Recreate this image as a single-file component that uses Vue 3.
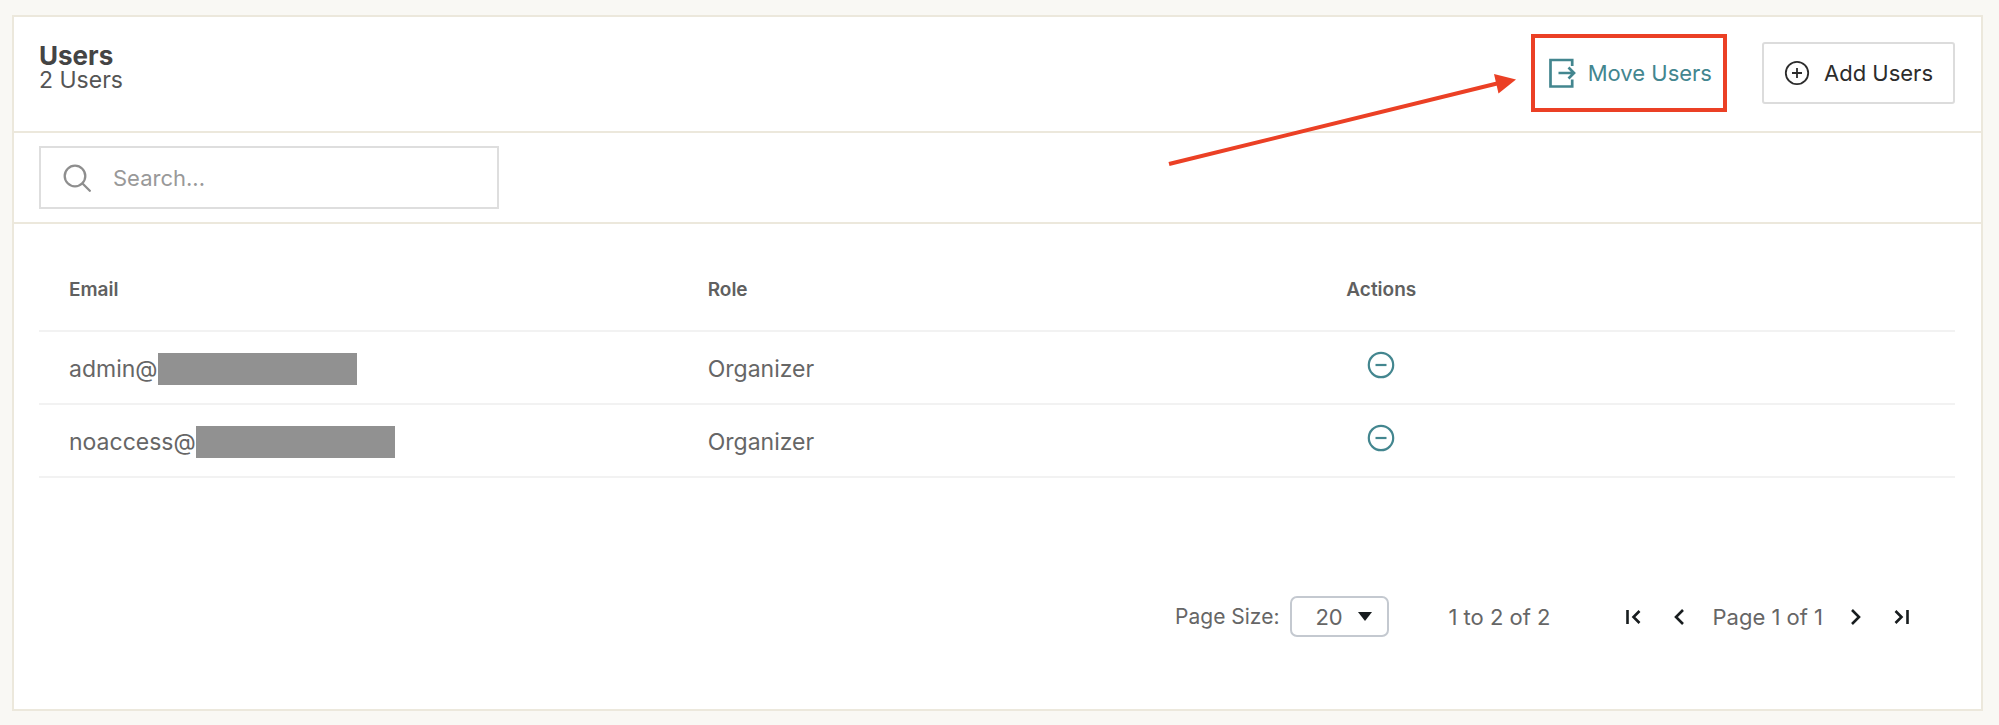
<script setup>
import { ref } from 'vue'

const search = ref('')
const pageSize = ref('20')
const users = [
  { name: 'admin@', role: 'Organizer' },
  { name: 'noaccess@', role: 'Organizer' }
]
</script>

<template>
  <main class="page">
    <section class="card">
      <header class="head">
        <div>
          <h1 class="title">Users</h1>
          <p class="count">2 Users</p>
        </div>
        <div class="head-actions">
          <div class="highlight">
            <svg class="arrow" width="357" height="100" viewBox="0 0 357 100" aria-hidden="true">
              <path d="M9 93 L337 12.500" stroke="#eb4025" stroke-width="4" />
              <path d="M334 3 L356 8.500 L338.500 22.500 Z" fill="#eb4025" />
            </svg>
            <button type="button" class="move">
              <svg width="28" height="32" viewBox="0 0 28 32" fill="none" stroke="currentColor" stroke-width="2.700" aria-hidden="true">
                <path d="M24.200 9 V3 H2.500 V29.500 H24.200 V22.500" />
                <path d="M10.500 16 H26 M20.500 10.500 L26 16 L20.500 21.500" />
              </svg>
              Move Users
            </button>
          </div>
          <button type="button" class="add">
            <svg width="26" height="26" viewBox="0 0 26 26" fill="none" stroke="currentColor" stroke-width="1.800" aria-hidden="true">
              <circle cx="13" cy="13" r="11.200" />
              <path d="M13 8 V18 M8 13 H18" />
            </svg>
            Add Users
          </button>
        </div>
      </header>

      <div class="toolbar">
        <label class="search">
          <svg width="28" height="28" viewBox="0 0 28 28" fill="none" stroke="#8e8e8e" stroke-width="2.300" stroke-linecap="round" aria-hidden="true">
            <circle cx="12" cy="12" r="10.300" />
            <path d="M19.500 19.500 L26.800 26.800" />
          </svg>
          <input v-model="search" type="text" placeholder="Search..." aria-label="Search users" />
        </label>
      </div>

      <div class="body">
        <table class="table">
          <thead>
            <tr>
              <th scope="col">Email</th>
              <th scope="col">Role</th>
              <th scope="col">Actions</th>
            </tr>
          </thead>
          <tbody>
            <tr v-for="user in users" :key="user.name">
              <td>
                <div class="email">{{ user.name }}<span class="mask"></span></div>
              </td>
              <td>{{ user.role }}</td>
              <td>
                <button type="button" class="remove" aria-label="Remove user">
                  <svg width="28" height="28" viewBox="0 0 28 28" fill="none" stroke="currentColor" stroke-width="2.200" aria-hidden="true">
                    <circle cx="14" cy="14" r="12.200" />
                    <path d="M8.500 14 H19.500" />
                  </svg>
                </button>
              </td>
            </tr>
          </tbody>
        </table>

        <footer class="pager">
          <label class="size-label" for="page-size">Page Size:</label>
          <div class="size">
            <select id="page-size" v-model="pageSize">
              <option>20</option>
              <option>50</option>
              <option>100</option>
            </select>
            <svg class="caret" width="14" height="9" viewBox="0 0 14 9" aria-hidden="true">
              <path d="M0 0 H14 L7 9 Z" fill="#181d1f" />
            </svg>
          </div>
          <span class="range">1 to 2 of 2</span>
          <nav class="nav" aria-label="Pages">
            <button type="button" aria-label="First page">
              <svg width="16" height="16" viewBox="0 0 16 16"><path d="M2.500 1 V15 M14.500 2 L8.500 8 L14.500 14" /></svg>
            </button>
            <button type="button" aria-label="Previous page">
              <svg width="16" height="16" viewBox="0 0 16 16"><path d="M12 1 L5 8 L12 15" /></svg>
            </button>
            <span class="page-text">Page 1 of 1</span>
            <button type="button" aria-label="Next page">
              <svg width="16" height="16" viewBox="0 0 16 16"><path d="M4 1 L11 8 L4 15" /></svg>
            </button>
            <button type="button" aria-label="Last page">
              <svg width="16" height="16" viewBox="0 0 16 16"><path d="M13.500 1 V15 M1.500 2 L7.500 8 L1.500 14" /></svg>
            </button>
          </nav>
        </footer>
      </div>
    </section>
  </main>
</template>

<style>
body {
  background: #f9f8f4;
}
</style>

<style scoped>
.page {
  padding: 15px 16px 15px 12px;
  font-family: Inter, 'Liberation Sans', sans-serif;
  font-size: 22px;
  line-height: 24px;
  color: #666;
}
.page * {
  box-sizing: border-box;
}
.page button,
.page select,
.page input {
  font: inherit;
  background: none;
  border: 0;
  padding: 0;
  margin: 0;
}
.page button {
  cursor: pointer;
}
.page svg {
  display: block;
  flex: none;
}
.card {
  background: #fff;
  border: 2px solid #ece8dc;
}
.head {
  display: flex;
  justify-content: space-between;
  align-items: flex-start;
  padding: 17px 26px 19px 25px;
  border-bottom: 2px solid #ece8dc;
}
.title {
  margin: 10px 0 0;
  font-size: 26px;
  line-height: 24px;
  font-weight: 700;
  color: #444;
}
.count {
  margin: 0;
  font-size: 23px;
  color: #555;
}
.head-actions {
  display: flex;
  align-items: center;
  gap: 35px;
}
.highlight {
  position: relative;
  border: 4px solid #eb4025;
}
.arrow {
  position: absolute;
  top: 33px;
  right: calc(100% + 18px);
  pointer-events: none;
}
.page .move {
  display: flex;
  align-items: center;
  gap: 12px;
  height: 70px;
  padding: 0 11px 0 13px;
  color: #43868f;
}
.page .add {
  display: flex;
  align-items: center;
  gap: 14px;
  height: 62px;
  padding: 0 20px;
  border: 2px solid #dcdcdc;
  border-radius: 3px;
  color: #2c2c2c;
}
.toolbar {
  padding: 13px 25px;
  border-bottom: 2px solid #ece8dc;
}
.search {
  display: flex;
  align-items: center;
  gap: 22px;
  width: 460px;
  max-width: 100%;
  height: 63px;
  padding: 0 22px;
  border: 2px solid #dedede;
}
.page .search input {
  flex: 1;
  min-width: 0;
  outline: none;
  color: #444;
}
.search input::placeholder {
  color: #999;
  opacity: 1;
}
.body {
  padding: 24px 26px 72px 25px;
}
.table {
  width: 100%;
  table-layout: fixed;
  border-collapse: separate;
  border-spacing: 0;
}
.table th,
.table td {
  padding: 2px 30px 0;
  text-align: left;
  border-bottom: 2px solid #f2f2f2;
}
.table th {
  height: 84px;
  font-size: 19px;
  font-weight: 600;
  color: #606060;
}
.table td {
  height: 73px;
  font-size: 23px;
}
.email {
  display: flex;
  align-items: center;
}
.mask {
  width: 199px;
  height: 32px;
  background: #919191;
}
.page .remove {
  display: block;
  margin: 0 0 8px 21px;
  color: #43868f;
}
.pager {
  display: flex;
  justify-content: flex-end;
  align-items: center;
  margin-top: 118px;
  padding-right: 45px;
}
.size-label {
  font-size: 21px;
}
.size {
  position: relative;
  width: 99px;
  margin: 0 59px 0 11px;
}
.page .size select {
  display: block;
  appearance: none;
  width: 100%;
  height: 41px;
  padding: 0 40px 0 23px;
  border: 2px solid #c4c9d0;
  border-radius: 7px;
  color: #666;
}
.caret {
  position: absolute;
  top: 16px;
  right: 17px;
  pointer-events: none;
}
.range {
  margin-right: 75px;
}
.nav {
  display: flex;
  align-items: center;
  gap: 30px;
}
.page-text {
  margin: 0 -5px;
}
.nav path {
  fill: none;
  stroke: #181d1f;
  stroke-width: 2.600;
}
</style>
